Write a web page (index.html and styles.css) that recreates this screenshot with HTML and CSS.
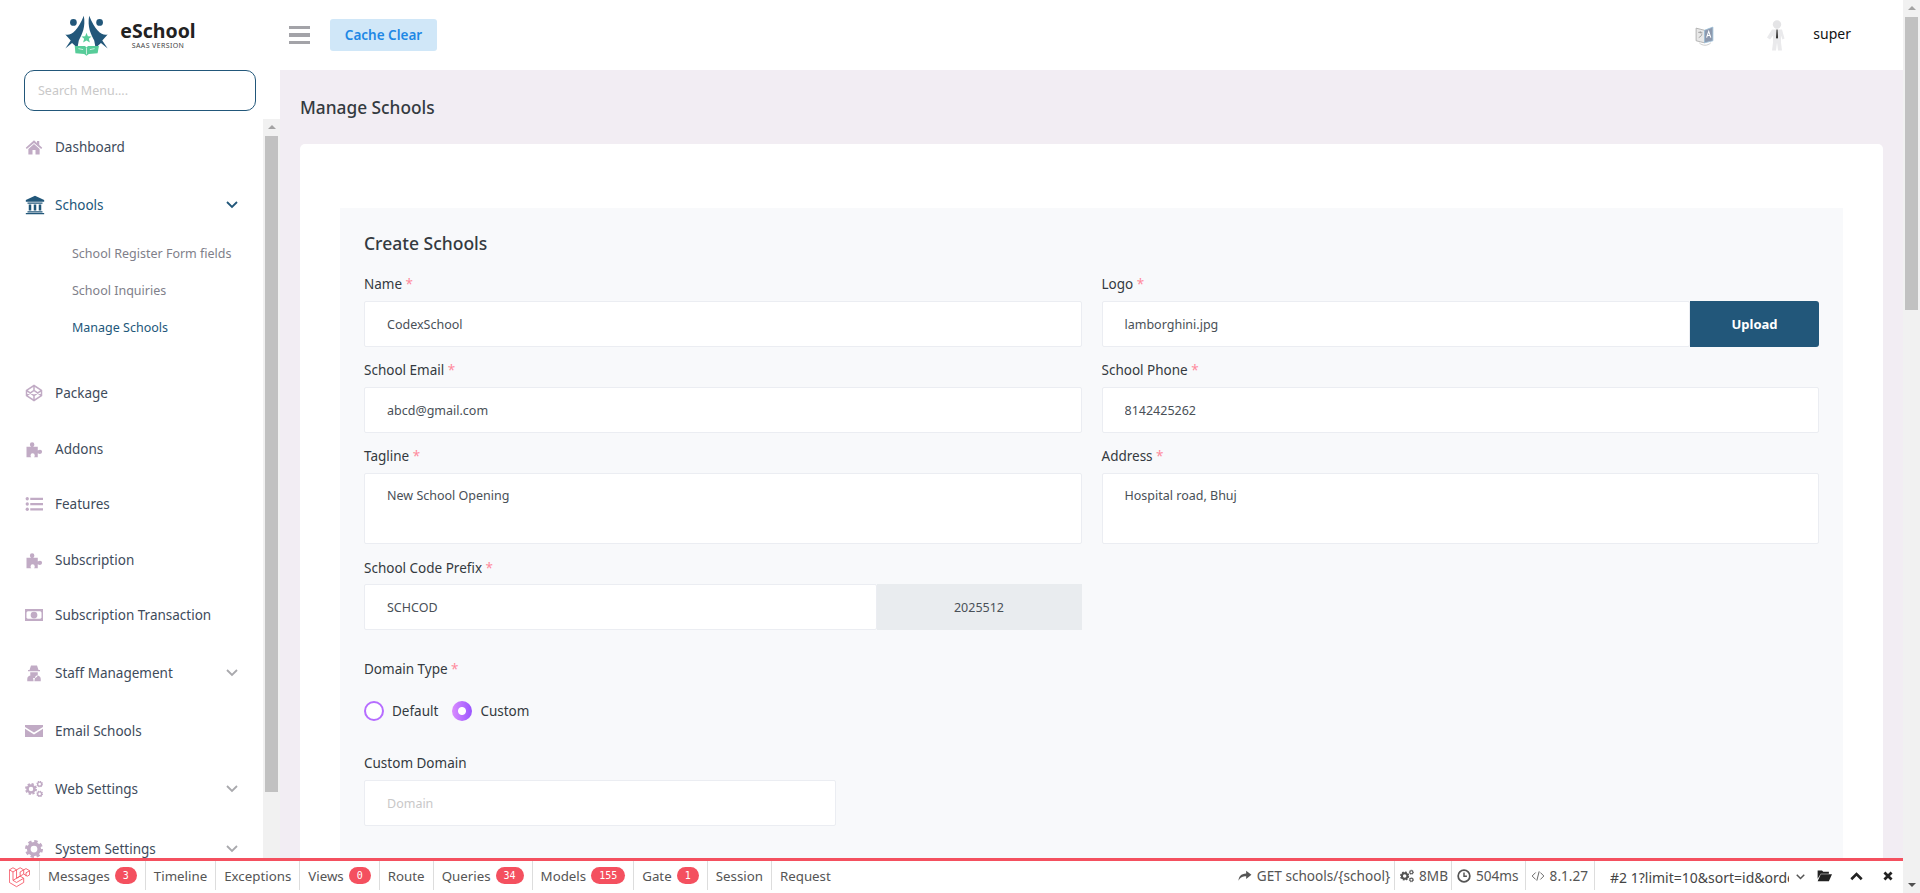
FILE: index.html
```html
<!DOCTYPE html>
<html lang="en">

<head>
    <meta charset="UTF-8">
    <meta name="viewport" content="width=device-width, initial-scale=1.0">
    <title>Manage Schools - eSchool</title>
    <link rel="stylesheet" href="styles.css">
</head>

<body>
    <svg class="sprite" xmlns="http://www.w3.org/2000/svg">
        <symbol id="i-home" viewBox="0 0 24 24"><path d="M12 3 1 13l1.400 1.500L12 6.500l9.600 8L23 13l-4-3.600V4h-3v2.700zM4.500 14.500V22H10v-6h4v6h5.500v-7.500L12 8z"/></symbol>
        <symbol id="i-bank" viewBox="0 0 24 24"><path d="M12 1 1 6v2h22V6zM3 9h18v1.500H3zM4.500 11.500h3v7h-3zM10.500 11.500h3v7h-3zM16.500 11.500h3v7h-3zM3 19.500h18V21H3zM1 21.500h22V23H1z"/></symbol>
        <symbol id="i-codepen" viewBox="0 0 24 24"><path d="M12 2l10 6.500v7L12 22 2 15.500v-7zM2 8.500l10 7 10-7M2 15.500l10-7 10 7M12 2v6.500M12 15.500V22" fill="none" stroke="currentColor" stroke-width="2"/></symbol>
        <symbol id="i-puzzle" viewBox="0 0 24 24"><path d="M2 9h6c-1-1-1.500-2-1.500-3a3 3 0 0 1 6 0c0 1-.5 2-1.500 3h6v5c1-.8 2-1 3-1a2.800 2.800 0 0 1 0 5.600c-1 0-2-.3-3-1V23h-5c.8-1 1-1.700 1-2.500a2.800 2.800 0 0 0-5.600 0c0 .8.2 1.500 1 2.500H2z"/></symbol>
        <symbol id="i-list" viewBox="0 0 24 24"><circle cx="3" cy="5" r="2.200"/><circle cx="3" cy="12" r="2.200"/><circle cx="3" cy="19" r="2.200"/><path d="M7 3.500h17v3H7zM7 10.500h17v3H7zM7 17.500h17v3H7z"/></symbol>
        <symbol id="i-money" viewBox="0 0 24 24"><path fill-rule="evenodd" d="M0 4h24v16H0zM3.500 7 2 8.500v7L3.500 17h17l1.500-1.500v-7L20.500 7z"/><circle cx="12" cy="12" r="4.500"/></symbol>
        <symbol id="i-secret" viewBox="0 0 24 24"><path d="M8 2h8l2 6h2v1.500H4V8h2zM7 11h10v2.500a5 5 0 0 1-10 0zM3 23v-3c0-3 2-4.500 5-5l2.500 2 1 6zM21 23v-3c0-3-2-4.500-5-5l-2.500 2-1 6z"/></symbol>
        <symbol id="i-mail" viewBox="0 0 24 24"><path d="M0 4h24v2.500L12 14 0 6.500zM0 9l12 7.500L24 9v11H0z"/></symbol>
        <symbol id="i-cog" viewBox="0 0 24 24"><circle cx="12" cy="12" r="7" fill="none" stroke="currentColor" stroke-width="5"/><circle cx="12" cy="12" r="10" fill="none" stroke="currentColor" stroke-width="4" stroke-dasharray="4.400 3.450"/></symbol>
        <symbol id="i-cogs" viewBox="0 0 24 24"><use href="#i-cog" x="0" y="4" width="16" height="16"/><use href="#i-cog" x="15" y="1" width="9" height="9"/><use href="#i-cog" x="15" y="14" width="9" height="9"/></symbol>
    </svg>

    <div class="page">
        <div class="wrap">
            <header class="topbar">
                <div class="brand">
                    <svg class="brand-logo" viewBox="197 50 128 122">
                        <circle cx="222" cy="72" r="10" fill="#22577a"/>
                        <circle cx="300" cy="72" r="10" fill="#22577a"/>
                        <path d="M198 108c17 4 35-8 55-56 6 34-5 54-15 74l-4 22-16-15-20 17 16-24z" fill="#22577a"/>
                        <path d="M324 108c-17 4-35-8-55-56-6 34 5 54 15 74l4 22 16-15 20 17-16-24z" fill="#22577a"/>
                        <path d="M261 103l4 10 11 1-8 7 3 11-10-6-10 6 3-11-8-7 11-1z" fill="#57cc99"/>
                        <path d="M226 142h30l5 4 5-4h32l-4 22-26 2-7 5-7-5-26-2z" fill="#57cc99"/>
                        <path d="M261 147v20M237 150l14 3M285 150l-14 3" fill="none" stroke="#fff" stroke-width="2"/>
                    </svg>
                    <div class="brand-text">
                        <span class="brand-name">eSchool</span>
                        <span class="brand-sub">SAAS VERSION</span>
                    </div>
                </div>
                <div class="burger"><span></span><span></span><span></span></div>
                <a href="#" class="cache-btn">Cache Clear</a>
                <div class="top-right">
                    <svg class="lang-icon" viewBox="0 0 18 20">
                        <path d="M1 3l8 2v12l-8-2z" fill="#e8e8e8" stroke="#a9a9a9" stroke-width=".8"/>
                        <path d="M9 5l8-3v13l-8 2z" fill="#8d99ae" stroke="#9fc0d8" stroke-width=".8"/>
                        <path d="M3 7h4M5 6v2M3.500 12c2-1 3-2 3-4" fill="none" stroke="#999" stroke-width=".8"/>
                        <path d="M11 12l2-6 2 6M12 10h2" fill="none" stroke="#fff" stroke-width="1"/>
                        <path d="M4 17c3 3 8 3 11 0" fill="none" stroke="#bbb" stroke-width=".7"/>
                    </svg>
                    <svg class="user-icon" viewBox="0 0 18 32">
                        <circle cx="10" cy="5" r="4.200" fill="#e4e4e6"/>
                        <path d="M5 10h10l2.500 9-2 1-1.500-4v7l1 8h-4l-1-8-1 8H5l1-8v-7l-3 4-3-2z" fill="#eaeaec"/>
                        <path d="M9.500 10h1l.5 8-1 1.500-1-1.500z" fill="#333"/>
                    </svg>
                    <span class="user-name">super</span>
                </div>
            </header>

            <div class="content-row">
                <aside class="sidebar">
                    <div class="search-box">
                        <input type="text" placeholder="Search Menu....">
                    </div>
                    <div class="side-scroll">
                        <ul class="nav">
                            <li class="nav-item first"><svg class="nav-icon"><use href="#i-home"/></svg>Dashboard</li>
                            <li class="nav-item tall active"><svg class="nav-icon"><use href="#i-bank"/></svg>Schools<svg class="chev" viewBox="0 0 12 8"><path d="M1 1l5 5 5-5"/></svg></li>
                            <li class="sub-nav">
                                <a href="#">School Register Form fields</a>
                                <a href="#">School Inquiries</a>
                                <a href="#" class="current">Manage Schools</a>
                            </li>
                            <li class="nav-item"><svg class="nav-icon"><use href="#i-codepen"/></svg>Package</li>
                            <li class="nav-item"><svg class="nav-icon"><use href="#i-puzzle"/></svg>Addons</li>
                            <li class="nav-item"><svg class="nav-icon"><use href="#i-list"/></svg>Features</li>
                            <li class="nav-item"><svg class="nav-icon"><use href="#i-puzzle"/></svg>Subscription</li>
                            <li class="nav-item"><svg class="nav-icon"><use href="#i-money"/></svg>Subscription Transaction</li>
                            <li class="nav-item tall staff"><svg class="nav-icon"><use href="#i-secret"/></svg>Staff Management<svg class="chev" viewBox="0 0 12 8"><path d="M1 1l5 5 5-5"/></svg></li>
                            <li class="nav-item tall"><svg class="nav-icon"><use href="#i-mail"/></svg>Email Schools</li>
                            <li class="nav-item tall"><svg class="nav-icon"><use href="#i-cogs"/></svg>Web Settings<svg class="chev" viewBox="0 0 12 8"><path d="M1 1l5 5 5-5"/></svg></li>
                            <li class="nav-item tall system"><svg class="nav-icon"><use href="#i-cog"/></svg>System Settings<svg class="chev" viewBox="0 0 12 8"><path d="M1 1l5 5 5-5"/></svg></li>
                        </ul>
                        <div class="scrollbar">
                            <span class="arrow-up"></span>
                            <div class="thumb side-thumb"></div>
                        </div>
                    </div>
                </aside>

                <main class="main">
                    <h2 class="page-title">Manage Schools</h2>
                    <div class="card">
                        <form class="panel">
                            <h3 class="panel-title">Create Schools</h3>
                            <div class="form-grid">
                                <div class="field">
                                    <label>Name <span class="req">*</span></label>
                                    <input type="text" value="CodexSchool">
                                </div>
                                <div class="field">
                                    <label>Logo <span class="req">*</span></label>
                                    <div class="input-group">
                                        <input type="text" value="lamborghini.jpg">
                                        <button type="button" class="upload-btn">Upload</button>
                                    </div>
                                </div>
                                <div class="field">
                                    <label>School Email <span class="req">*</span></label>
                                    <input type="text" value="abcd@gmail.com">
                                </div>
                                <div class="field">
                                    <label>School Phone <span class="req">*</span></label>
                                    <input type="text" value="8142425262">
                                </div>
                                <div class="field">
                                    <label>Tagline <span class="req">*</span></label>
                                    <textarea>New School Opening</textarea>
                                </div>
                                <div class="field">
                                    <label>Address <span class="req">*</span></label>
                                    <textarea>Hospital road, Bhuj</textarea>
                                </div>
                                <div class="field prefix">
                                    <label>School Code Prefix <span class="req">*</span></label>
                                    <div class="input-group">
                                        <input type="text" value="SCHCOD">
                                        <span class="addon">2025512</span>
                                    </div>
                                </div>
                            </div>

                            <div class="domain-type">
                                <label>Domain Type <span class="req">*</span></label>
                                <div class="radios">
                                    <span class="radio"></span><span class="radio-text">Default</span>
                                    <span class="radio checked"></span><span class="radio-text">Custom</span>
                                </div>
                            </div>

                            <div class="field custom-domain">
                                <label>Custom Domain</label>
                                <input type="text" placeholder="Domain">
                            </div>
                        </form>
                    </div>
                </main>
            </div>
        </div>

        <div class="scrollbar page-scroll">
            <span class="arrow-up"></span>
            <div class="thumb page-thumb"></div>
            <span class="arrow-down"></span>
        </div>

        <!-- debugbar sits over the page -->
        <div class="debugbar">
            <div class="db-logo">
                <svg viewBox="0 0 50 52">
                    <path d="M1 9l8.500-5L18 9l-8.500 5zM1 9v30l17 10 17-10V29l-17 10-8.500-5V14M18 9v20l-8.500 5M18 29l17-10V9l-8.500-5L18 9M26.500 14L35 9M26.500 14v10M18 29l8.500-5 8.500 5M35 19l8.500 5L49 21V11l-8.500-5L35 9M40.500 16v8M40.500 16L49 11" fill="none" stroke="#f4505f" stroke-width="2" stroke-linejoin="round"/>
                </svg>
            </div>
            <span class="db-tab">Messages <b class="badge">3</b></span>
            <span class="db-tab">Timeline</span>
            <span class="db-tab">Exceptions</span>
            <span class="db-tab">Views <b class="badge">0</b></span>
            <span class="db-tab">Route</span>
            <span class="db-tab">Queries <b class="badge">34</b></span>
            <span class="db-tab">Models <b class="badge">155</b></span>
            <span class="db-tab">Gate <b class="badge">1</b></span>
            <span class="db-tab">Session</span>
            <span class="db-tab last">Request</span>

            <div class="db-right">
                <span class="db-stat route"><svg class="db-icon" viewBox="0 0 24 24"><path d="M14 3l9 7-9 7v-4.500C8 12.500 4 14 1 20c0-7 4-12 13-12.500z"/></svg>GET schools/{school}</span>
                <span class="db-stat mem"><svg class="db-icon"><use href="#i-cogs"/></svg>8MB</span>
                <span class="db-stat"><svg class="db-icon" viewBox="0 0 24 24"><circle cx="12" cy="12" r="10" fill="none" stroke="currentColor" stroke-width="3"/><path d="M12 6v6.500h5" fill="none" stroke="currentColor" stroke-width="2.500"/></svg>504ms</span>
                <span class="db-stat"><svg class="db-icon" viewBox="0 0 24 24"><path d="M8 6l-6 6 6 6M16 6l6 6-6 6M14 4l-4 16" fill="none" stroke="currentColor" stroke-width="1.500"/></svg>8.1.27</span>
                <span class="db-select">#2 1?limit=10&amp;sort=id&amp;order=desc</span>
                <svg class="db-caret" viewBox="0 0 12 8"><path d="M1 1l5 5 5-5"/></svg>
                <svg class="db-btn folder" viewBox="0 0 24 20"><path d="M1 2h7l2 2h9v3H6L1 15zM6 8h18l-5 11H1z"/></svg>
                <svg class="db-btn up" viewBox="0 0 20 14"><path d="M2 12l8-8 8 8" fill="none" stroke="#222" stroke-width="4"/></svg>
                <svg class="db-btn close" viewBox="0 0 14 14"><path d="M2 2l10 10M12 2L2 12" fill="none" stroke="#222" stroke-width="3.800"/></svg>
            </div>
        </div>
    </div>
</body>

</html>
```

FILE: styles.css
```css
* {
    box-sizing: border-box;
}

html, body {
    margin: 0;
    padding: 0;
    height: 100%;
    overflow: hidden;
}

body {
    font-family: 'Noto Sans', sans-serif;
    font-size: 13.5px;
    color: #343a40;
    background-color: #f2edf3;
}

.sprite {
    display: none;
}

.page {
    position: relative;
    display: flex;
    width: 1920px;
    height: 893px;
    overflow: hidden;
}

.wrap {
    width: 1903px;
    display: flex;
    flex-direction: column;
}

/* top bar */
.topbar {
    display: flex;
    align-items: center;
    height: 70px;
    background-color: #fff;
    flex-shrink: 0;
}

.brand {
    width: 280px;
    height: 70px;
    padding-left: 65px;
    display: flex;
    align-items: center;
    gap: 13px;
}

.brand-logo {
    width: 43px;
    height: 41px;
}

.brand-text {
    display: flex;
    flex-direction: column;
    align-items: center;
    width: 74px;
}

.brand-name {
    font-size: 19.500px;
    font-weight: 700;
    line-height: 22px;
    color: #222;
}

.brand-sub {
    font-size: 7px;
    line-height: 8px;
    letter-spacing: .4px;
    color: #444;
}

.burger {
    width: 21px;
    margin-left: 9px;
    margin-right: 20px;
    display: flex;
    flex-direction: column;
    gap: 4px;
}

.burger span {
    display: block;
    height: 3.500px;
    background-color: #a3a3a8;
}

.cache-btn {
    display: flex;
    align-items: center;
    justify-content: center;
    width: 107px;
    height: 32px;
    border-radius: 3px;
    background-color: #d0e7f8;
    color: #1e88e5;
    font-size: 13.500px;
    font-weight: 600;
    text-decoration: none;
}

.top-right {
    margin-left: auto;
    display: flex;
    align-items: center;
    padding-right: 52px;
}

.lang-icon {
    width: 19px;
    height: 21px;
    margin-right: 53px;
}

.user-icon {
    width: 18px;
    height: 33px;
    margin-right: 28px;
}

.user-name {
    font-size: 14px;
    color: #111;
    margin-top: -3px;
}

/* sidebar */
.content-row {
    display: flex;
    flex: 1;
    min-height: 0;
}

.sidebar {
    width: 280px;
    flex-shrink: 0;
    background-color: #fff;
    display: flex;
    flex-direction: column;
}

.search-box {
    padding: 0 24px;
    height: 49px;
}

.search-box input {
    width: 232px;
    height: 41px;
    padding: 0 13px;
    border: 1.500px solid #22577a;
    border-radius: 10px;
    outline: none;
    font-family: inherit;
    font-size: 12.500px;
}

.search-box input::placeholder {
    color: #c9c8c8;
}

.side-scroll {
    display: flex;
    flex: 1;
    min-height: 0;
}

.nav {
    list-style: none;
    margin: 0;
    padding: 0 0 0 25px;
    width: 263px;
    overflow: hidden;
    color: #3e4b5b;
}

.nav-item {
    display: flex;
    align-items: center;
    height: 55.500px;
    font-size: 13.5px;
    color: #3e4b5b;
}

.nav-item.first {
    height: 56px;
    margin-bottom: 1px;
}

.nav-item.tall {
    height: 58px;
}

.nav-item.staff {
    margin-top: .5px;
}

.nav-item.system {
    margin-top: 2px;
}

.nav-item.active {
    color: #22577a;
}

.nav-icon {
    width: 18px;
    height: 18px;
    margin-right: 12px;
    fill: #c1abc5;
    color: #c1abc5;
    flex-shrink: 0;
}

.nav-item.active .nav-icon {
    width: 20px;
    height: 20px;
    margin-right: 10px;
    fill: #22577a;
    color: #22577a;
}

.chev {
    width: 12px;
    height: 8px;
    margin-left: auto;
    margin-right: 25px;
    fill: none;
    stroke: #a9a9ad;
    stroke-width: 1.800;
}

.nav-item.active .chev {
    stroke: #22577a;
}

.sub-nav {
    padding-left: 47px;
    padding-top: 1px;
    margin-bottom: 19.500px;
}

.sub-nav a {
    display: block;
    height: 37px;
    line-height: 37px;
    font-size: 12.500px;
    color: #80808a;
    text-decoration: none;
}

.sub-nav a.current {
    color: #22577a;
}

.scrollbar {
    position: relative;
    width: 17px;
    flex-shrink: 0;
    background-color: #f1f1f1;
}

.thumb {
    position: absolute;
    left: 2px;
    width: 13px;
    background-color: #c1c1c1;
}

.side-thumb {
    top: 17px;
    height: 656px;
}

.page-thumb {
    top: 17px;
    height: 293px;
}

.arrow-up, .arrow-down {
    position: absolute;
    left: 5px;
    width: 0;
    height: 0;
    border-left: 4px solid transparent;
    border-right: 4px solid transparent;
}

.arrow-up {
    top: 6px;
    border-bottom: 4px solid #a3a3a3;
}

.arrow-down {
    bottom: 6px;
    border-top: 4px solid #505050;
}

.page-scroll {
    height: 893px;
}

/* main */
.main {
    flex: 1;
    min-width: 0;
    padding: 26px 20px 0;
    background-color: #f2edf3;
    overflow: hidden;
}

.page-title {
    margin: 0 0 24px;
    font-size: 17.300px;
    font-weight: 500;
    line-height: 24px;
    color: #343a40;
}

.card {
    background-color: #fff;
    border-radius: 5px;
    padding: 64px 40px 0;
    height: 800px;
}

.panel {
    background-color: #f8f9fb;
    padding: 23px 24px 40px;
    height: 736px;
}

.panel-title {
    margin: 0 0 19px;
    font-size: 17.500px;
    font-weight: 500;
    line-height: 24px;
    color: #343a40;
}

.form-grid {
    display: grid;
    grid-template-columns: 1fr 1fr;
    column-gap: 20px;
    row-gap: 13px;
}

.field label, .domain-type label {
    display: block;
    font-size: 13.500px;
    line-height: 20px;
    margin-bottom: 7px;
    color: #343a40;
}

.field.prefix label {
    margin-top: 1px;
    margin-bottom: 6px;
}

.req {
    color: #ff8a9c;
}

.field input, .field textarea {
    display: block;
    width: 100%;
    height: 46px;
    padding: 0 22px;
    border: 1px solid #ebedf2;
    border-radius: 2px;
    outline: none;
    background-color: #fff;
    font-family: inherit;
    font-size: 12.500px;
    color: #495057;
}

.field textarea {
    height: 71px;
    padding-top: 13px;
    resize: none;
    line-height: 18px;
    overflow: hidden;
}

.field input::placeholder {
    color: #c9c8c8;
}

.input-group {
    display: flex;
}

.input-group input {
    flex: 1;
    min-width: 0;
}

.upload-btn {
    width: 129px;
    height: 46px;
    border: none;
    border-radius: 0 3px 3px 0;
    background-color: #22577a;
    color: #fff;
    font-family: inherit;
    font-size: 13px;
    font-weight: 700;
    cursor: pointer;
}

.addon {
    display: flex;
    align-items: center;
    justify-content: center;
    width: 205px;
    height: 46px;
    background-color: #e9ecef;
    font-size: 12.500px;
    color: #495057;
}

.domain-type {
    margin-top: 29px;
}

.domain-type label {
    margin-bottom: 22px;
}

.radios {
    display: flex;
    align-items: center;
    height: 20px;
}

.radio {
    width: 20px;
    height: 20px;
    border: 2px solid #b66dff;
    border-radius: 50%;
    background-color: #fff;
    flex-shrink: 0;
}

.radio.checked {
    border: none;
    background: radial-gradient(circle, #fff 0 3.500px, transparent 4.500px), linear-gradient(to right, #da8cff, #9a55ff);
}

.radio-text {
    margin-left: 8px;
    margin-right: 14px;
    font-size: 13.500px;
    color: #343a40;
}

.custom-domain {
    margin-top: 32px;
    width: 472px;
}

/* debugbar */
.debugbar {
    position: absolute;
    left: 0;
    bottom: 0;
    width: 1903px;
    height: 35px;
    display: flex;
    align-items: flex-start;
    background-color: #fff;
    border-top: 3px solid #f4505f;
    font-size: 13.300px;
    color: #555;
}

.db-logo {
    width: 40px;
    height: 29px;
    padding: 5px 0 0 9px;
    border-right: 1px solid #ddd;
}

.db-logo svg {
    width: 21px;
    height: 22px;
    display: block;
}

.db-tab {
    display: flex;
    align-items: center;
    height: 29px;
    padding: 0 8px;
    border-right: 1px solid #ddd;
    white-space: nowrap;
}

.db-tab.last {
    border-right: none;
}

.badge {
    margin-left: 5px;
    padding: 0 8px;
    height: 17px;
    line-height: 17px;
    border-radius: 9px;
    background-color: #f4505f;
    color: #fff;
    font-family: 'DejaVu Sans Mono', monospace;
    font-size: 10px;
    font-weight: 400;
}

.db-right {
    margin-left: auto;
    display: flex;
    align-items: center;
    height: 29px;
}

.db-stat {
    display: flex;
    align-items: center;
    height: 29px;
    padding: 0 6px 0 5px;
    border-right: 1px solid #ddd;
    white-space: nowrap;
    font-size: 13.600px;
}

.db-stat.route {
    padding-right: 4px;
}

.db-stat.mem {
    padding-right: 3px;
}

.db-icon {
    width: 14px;
    height: 14px;
    margin-right: 5px;
    fill: #555;
    color: #555;
    flex-shrink: 0;
}

.db-select {
    width: 179px;
    margin-left: 15px;
    overflow: hidden;
    white-space: nowrap;
    font-size: 14px;
    color: #444;
    padding-top: 3px;
}

.db-caret {
    width: 9px;
    height: 6px;
    margin-left: 7px;
    fill: none;
    stroke: #555;
    stroke-width: 2;
    margin-top: 3px;
    flex-shrink: 0;
}

.db-btn {
    fill: #222;
    flex-shrink: 0;
}

.db-btn.folder {
    width: 15px;
    height: 13px;
    margin-left: 12px;
}

.db-btn.up {
    width: 13px;
    height: 10px;
    margin-left: 18px;
}

.db-btn.close {
    width: 10px;
    height: 10px;
    margin-left: 20px;
    margin-right: 10px;
}
```
